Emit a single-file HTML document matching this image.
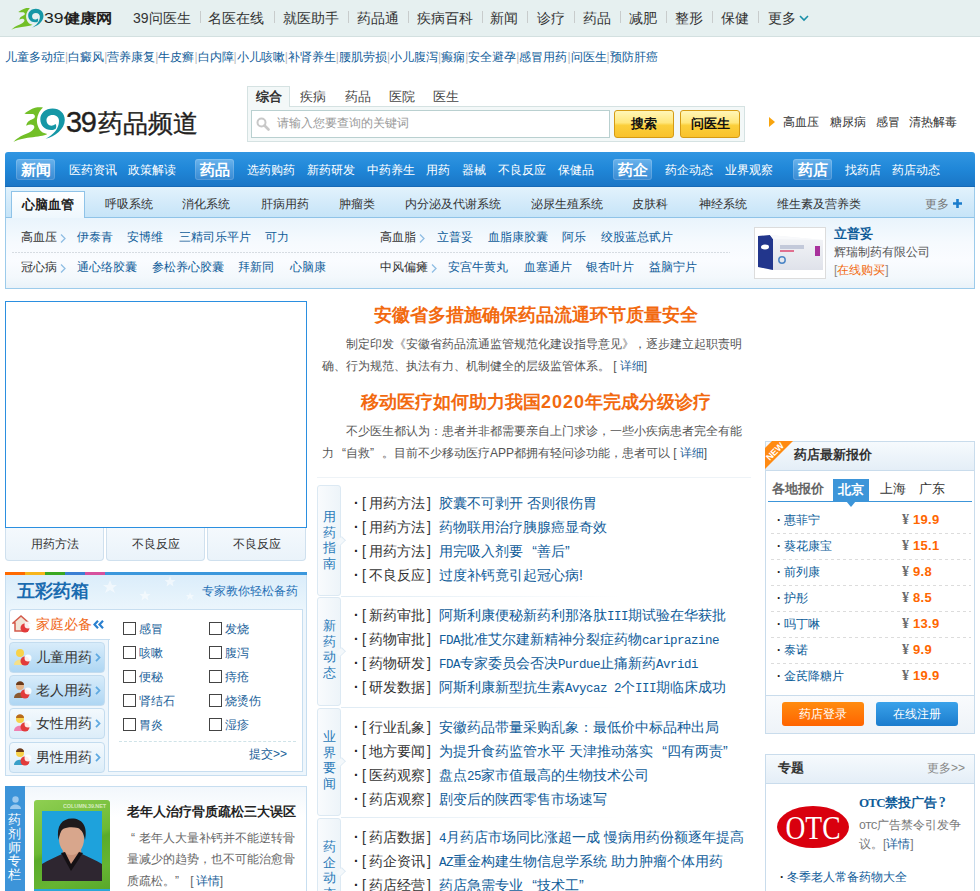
<!DOCTYPE html>
<html><head><meta charset="utf-8">
<style>
*{margin:0;padding:0;box-sizing:border-box}
body{width:980px;height:891px;overflow:hidden;position:relative;background:#fff;font-family:"Liberation Sans",sans-serif;font-size:12px;color:#333}
.a{position:absolute;white-space:nowrap}
a{color:inherit;text-decoration:none}
/* top bar */
#top{position:absolute;left:0;top:0;width:980px;height:37px;background:#e6f0f0;border-bottom:1px solid #d3e0e0}
#top .nav{position:absolute;top:9px;font-size:14px;color:#333;line-height:18px}
#top .sep{position:absolute;top:11px;width:1px;height:12px;background:#c8cccc}
#links{position:absolute;left:5px;top:48px;font-size:12px;line-height:18px;color:#0f5c99}
#links i{font-style:normal;color:#bbb}

/* header */
#srch{position:absolute;left:247px;top:106px;width:498px;height:36px;background:#f3f8f8;border:1px solid #d5e2e2}
#stab{position:absolute;left:247px;top:86px;width:43px;height:21px;background:#f3f8f8;border:1px solid #d5e2e2;border-bottom:none;font-weight:bold;font-size:13px;color:#333;text-align:center;line-height:19px}
.stx{position:absolute;top:87px;font-size:13px;color:#444;line-height:19px}
#sinp{position:absolute;left:251px;top:110px;width:359px;height:28px;background:#fff;border:1px solid #b9d0d0}
.btn{position:absolute;top:110px;width:60px;height:28px;border:1px solid #d59b14;border-radius:3px;background:linear-gradient(#fff6b8,#ffe77c 45%,#fbcf3b 55%,#f9c22c);font-weight:bold;font-size:13px;color:#111;text-align:center;line-height:25px}
.hk{position:absolute;top:113px;font-size:12px;color:#333;line-height:18px}
/* blue nav */
#bnav{position:absolute;left:5px;top:152px;width:970px;height:35px;background:linear-gradient(#3196e2,#2087d8 50%,#1a76c6);border-bottom:1px solid #1669b6;border-radius:3px 3px 0 0}
.bn{position:absolute;top:161px;font-size:12px;color:#fff;line-height:18px}
.bb{position:absolute;top:159px;height:21px;width:39px;border-radius:3px;background:linear-gradient(#6ab3ec,#4c9de0 50%,#3a8ad2);box-shadow:inset 0 0 0 1px rgba(255,255,255,.15);font-weight:bold;font-size:15px;color:#fff;text-align:center;line-height:21px}
#subbar{position:absolute;left:5px;top:187px;width:970px;height:31px;background:linear-gradient(#e2f2fc,#c6e4f8);border-left:1px solid #9ccbeb;border-right:1px solid #9ccbeb;border-bottom:1px solid #8fc3e8}
.st{position:absolute;top:195px;font-size:12px;color:#333;line-height:18px}
#seltab{position:absolute;left:11px;top:191px;width:74px;height:27px;background:linear-gradient(#fff,#eef7fd);border:1px solid #8fc3e8;border-bottom:none;font-weight:bold;font-size:13px;color:#222;text-align:center;line-height:25px}
#cbox{position:absolute;left:5px;top:218px;width:970px;height:71px;border:1px solid #9ccbeb;border-top:none;background:linear-gradient(#e9f4fc,#f6fafe 35%,#fafcff 60%,#f3f8fc 85%,#e9f2f9)}
.cl{position:absolute;font-size:12px;color:#0f5c99;line-height:18px}
.ch{position:absolute;font-size:12px;color:#333;line-height:18px}
.ar{position:absolute;width:6px;height:10px}

/* left col */
#slide{position:absolute;left:5px;top:301px;width:302px;height:227px;border:1px solid #2b8fe0;background:#fff}
.tb{position:absolute;top:528px;width:99px;height:33px;border:1px solid #cfe0ee;border-top:none;border-radius:0 0 4px 4px;background:linear-gradient(#f4f9fd,#eaf3fa);font-size:12px;color:#333;text-align:center;line-height:32px}
#wc{position:absolute;left:5px;top:572px;width:302px;height:204px;border:1px solid #c7def0;border-top:none;background:linear-gradient(#d9ecfa,#eaf5fc 35px,#eef6fc 40px,#eef6fc)}
#wcs{position:absolute;left:5px;top:572px;width:302px;height:3px;background:linear-gradient(90deg,#ff6a00 0,#ff6a00 20px,#f7b51c 20px,#f7b51c 40px,#3aa822 40px,#3aa822 60px,#3b7fd4 60px,#3b7fd4 80px,#d6519e 80px,#d6519e 100px,#3b97dc 100px)}
#wcp{position:absolute;left:108px;top:609px;width:195px;height:163px;border:1px solid #c7def0;background:#fff}
.wb{position:absolute;left:9px;width:96px;height:31px;border:1px solid #c3dcef;border-radius:4px;font-size:14px;color:#333;line-height:29px}
.wb span{position:absolute;left:26px;top:0}
.cb{position:absolute;width:13px;height:13px;border:1px solid #444;background:#fff}
.cbl{position:absolute;font-size:12px;color:#1a6199;line-height:16px}
/* pharmacist */
#ph{position:absolute;left:5px;top:786px;width:302px;height:110px;border:1px solid #c7def0;background:linear-gradient(#f2f7fc,#fff 30px)}
#phs{position:absolute;left:5px;top:786px;width:20px;height:110px;background:#3c94d9}
/* middle */
.hl{position:absolute;font-size:18px;font-weight:bold;color:#f26a10;line-height:24px}
.pp{position:absolute;left:322px;width:430px;font-size:12px;color:#555;line-height:22px;text-indent:24px;white-space:normal}
.dl{color:#1a6199}
.gtab{position:absolute;left:317px;width:24px;border:1px solid #dce9f3;border-radius:3px;background:linear-gradient(90deg,#f9fbfd,#edf4f9);font-size:13px;color:#2a7ab8;text-align:center;line-height:15.7px;padding-top:0}
.gtab:after{content:"";position:absolute;right:-5px;top:50%;margin-top:-4px;width:7px;height:7px;background:#f4f8fb;border-top:1px solid #dce9f3;border-right:1px solid #dce9f3;transform:rotate(45deg) scaleX(.7)}
.gli{position:absolute;left:354px;width:400px;height:24px;font-size:14px;line-height:24px;color:#333;white-space:nowrap}
.gli b{position:absolute;left:85px;top:0;font-weight:normal;color:#0f5c99}
.gli i{font-style:normal;font-family:"Liberation Mono",monospace;font-size:12.5px;letter-spacing:-0.5px}
.gli u{text-decoration:none;position:absolute;left:0;top:0}
.gsep{position:absolute;left:341px;width:410px;height:1px;background:linear-gradient(90deg,#dfebf4,rgba(240,245,250,0) 280px)}
/* right */
#pr{position:absolute;left:765px;top:441px;width:210px;height:293px;border:1px solid #c9dcec;background:#fff}
#prh{position:absolute;left:766px;top:442px;width:208px;height:29px;background:linear-gradient(#f6fafd,#e4eef7);border-bottom:1px solid #c9dcec}
.pi{position:absolute;left:777px;font-size:12px;color:#0b5c98;line-height:18px}
.pv{position:absolute;left:902px;font-size:12px;color:#666;line-height:18px}
.pv em{font-style:normal;display:inline-block;width:11px;font-family:"Liberation Serif",serif;font-size:14px;font-weight:bold;color:#6a6a6a}
.pv b{color:#ff6600;font-size:13px;font-family:"Liberation Sans",sans-serif;letter-spacing:.3px}
.pd{position:absolute;left:771px;width:200px;height:1px;background:repeating-linear-gradient(90deg,#dcdcdc 0 3px,transparent 3px 6px)}
#prf{position:absolute;left:766px;top:695px;width:208px;height:38px;border-top:1px solid #c9dcec;background:linear-gradient(#f9fbfd,#eef3f8)}
.pb{position:absolute;top:702px;width:82px;height:24px;border-radius:3px;font-size:12px;color:#fff;text-align:center;line-height:24px}
#zt{position:absolute;left:765px;top:754px;width:210px;height:145px;border:1px solid #c9dcec;background:#fff}
#zth{position:absolute;left:766px;top:755px;width:208px;height:29px;background:linear-gradient(#f6fafd,#e4eef7);border-bottom:1px solid #c9dcec}
.ql{display:inline-block;width:1em;text-align:right;text-indent:0}.qr{display:inline-block;width:1em;text-align:left;text-indent:0}
</style></head>
<body>
<div id="top">
  <svg class="a" style="left:7.5px;top:1px" width="40" height="30" viewBox="0 0 64 48"><path d="M16.4 17.4 C20 15.5 23 13 27 11.8 C29.5 11.2 32 11.3 35 11.4 C32 14 29.5 18 28.9 24 C28.8 28 30.5 33 33.4 35.6 C35 37 37 37.6 39.3 38.1 C36 40 30 40.6 22 41.6 C16 42.5 9 44 5.4 46 C8 43 12 40 19 37.4 C22 36.4 25 34.5 26.2 32 C26.5 30.5 26 29.5 25.3 29.3 C23.5 28 21 28.4 18.2 29.8 C18.5 27.5 19.5 26 21 25 C23 23.5 25 23 26.2 22.2 C27 21.3 27 20 26.7 19.5 C26 18.5 25 18.1 24.4 18.1 C22 17.8 19 18.3 16.4 17.4 Z" fill="#72bf27"/><path d="M37.6 42.8 C47 40.5 56.8 33 56.8 24 C56.8 17 51.5 12.4 44.6 12.4 C37.5 12.4 32.3 17 32.3 23.2 C32.3 29.5 37 34 43 34 C45 34 46.5 33.5 47.5 33 C48.5 31.5 48.5 29 47.5 28 C46 29.3 44.8 29.7 43.5 29.7 C40.5 29.7 38.5 27.3 38.5 24.3 C38.5 21.5 40.5 19 44.6 19 C48.5 19 51 21.5 51 25 C51 33 45 39 37.6 42.8 Z" fill="#1597a6"/></svg>
  <div class="a" style="left:44px;top:9px;font-size:14px;font-weight:bold;color:#231f20;line-height:18px;transform:scaleX(1.17);transform-origin:0 0"><span style="font-weight:normal;font-size:15px">39</span>健康网</div>
  <div class="nav" style="left:133px">39问医生</div><span class="sep" style="left:200px"></span>
  <div class="nav" style="left:208px">名医在线</div><span class="sep" style="left:274px"></span>
  <div class="nav" style="left:283px">就医助手</div><span class="sep" style="left:348px"></span>
  <div class="nav" style="left:357px">药品通</div><span class="sep" style="left:408px"></span>
  <div class="nav" style="left:417px">疾病百科</div><span class="sep" style="left:482px"></span>
  <div class="nav" style="left:490px">新闻</div><span class="sep" style="left:527px"></span>
  <div class="nav" style="left:537px">诊疗</div><span class="sep" style="left:574px"></span>
  <div class="nav" style="left:583px">药品</div><span class="sep" style="left:620px"></span>
  <div class="nav" style="left:629px">减肥</div><span class="sep" style="left:666px"></span>
  <div class="nav" style="left:675px">整形</div><span class="sep" style="left:712px"></span>
  <div class="nav" style="left:721px">保健</div><span class="sep" style="left:758px"></span>
  <div class="nav" style="left:768px">更多</div>
  <svg class="a" style="left:799px;top:15px" width="10" height="7" viewBox="0 0 10 7"><path d="M1 1 L5 5 L9 1" stroke="#1a8fa8" stroke-width="1.6" fill="none"/></svg>
</div>
<div id="links">儿童多动症<i>|</i>白癜风<i>|</i>营养康复<i>|</i>牛皮癣<i>|</i>白内障<i>|</i>小儿咳嗽<i>|</i>补肾养生<i>|</i>腰肌劳损<i>|</i>小儿腹泻<i>|</i>癫痫<i>|</i>安全避孕<i>|</i>感冒用药<i>|</i>问医生<i>|</i>预防肝癌</div>


<svg class="a" style="left:8px;top:96px" width="64" height="48" viewBox="0 0 64 48"><path d="M16.4 17.4 C20 15.5 23 13 27 11.8 C29.5 11.2 32 11.3 35 11.4 C32 14 29.5 18 28.9 24 C28.8 28 30.5 33 33.4 35.6 C35 37 37 37.6 39.3 38.1 C36 40 30 40.6 22 41.6 C16 42.5 9 44 5.4 46 C8 43 12 40 19 37.4 C22 36.4 25 34.5 26.2 32 C26.5 30.5 26 29.5 25.3 29.3 C23.5 28 21 28.4 18.2 29.8 C18.5 27.5 19.5 26 21 25 C23 23.5 25 23 26.2 22.2 C27 21.3 27 20 26.7 19.5 C26 18.5 25 18.1 24.4 18.1 C22 17.8 19 18.3 16.4 17.4 Z" fill="#72bf27"/><path d="M37.6 42.8 C47 40.5 56.8 33 56.8 24 C56.8 17 51.5 12.4 44.6 12.4 C37.5 12.4 32.3 17 32.3 23.2 C32.3 29.5 37 34 43 34 C45 34 46.5 33.5 47.5 33 C48.5 31.5 48.5 29 47.5 28 C46 29.3 44.8 29.7 43.5 29.7 C40.5 29.7 38.5 27.3 38.5 24.3 C38.5 21.5 40.5 19 44.6 19 C48.5 19 51 21.5 51 25 C51 33 45 39 37.6 42.8 Z" fill="#1597a6"/></svg>
<div class="a" style="left:66px;top:105px;font-size:25px;font-weight:500;color:#231f20;line-height:34px;-webkit-text-stroke:.35px #231f20"><span style="font-size:29px;letter-spacing:-1.5px;margin-right:3px;font-weight:normal">39</span>药品频道</div>

<div id="srch"></div>
<div id="stab">综合</div>
<div class="stx" style="left:300px">疾病</div>
<div class="stx" style="left:345px">药品</div>
<div class="stx" style="left:389px">医院</div>
<div class="stx" style="left:433px">医生</div>
<div id="sinp"></div>
<svg class="a" style="left:256px;top:117px" width="14" height="14" viewBox="0 0 14 14"><circle cx="5.5" cy="5.5" r="4" stroke="#c8c8c8" stroke-width="2" fill="none"/><path d="M8.5 8.5 L12.5 12.5" stroke="#c8c8c8" stroke-width="2.6" stroke-linecap="round"/></svg>
<div class="a" style="left:277px;top:114px;font-size:12px;color:#999;line-height:18px">请输入您要查询的关键词</div>
<div class="btn" style="left:614px">搜索</div>
<div class="btn" style="left:680px">问医生</div>
<svg class="a" style="left:769px;top:117px" width="6" height="10" viewBox="0 0 6 10"><path d="M0 0 L6 5 L0 10Z" fill="#f8a40e"/></svg>
<div class="hk" style="left:783px">高血压</div>
<div class="hk" style="left:830px">糖尿病</div>
<div class="hk" style="left:876px">感冒</div>
<div class="hk" style="left:909px">清热解毒</div>

<div id="bnav"></div>
<div class="bb" style="left:16px">新闻</div>
<div class="bn" style="left:69px">医药资讯</div>
<div class="bn" style="left:128px">政策解读</div>
<div class="bb" style="left:195px">药品</div>
<div class="bn" style="left:247px">选药购药</div>
<div class="bn" style="left:307px">新药研发</div>
<div class="bn" style="left:367px">中药养生</div>
<div class="bn" style="left:426px">用药</div>
<div class="bn" style="left:462px">器械</div>
<div class="bn" style="left:498px">不良反应</div>
<div class="bn" style="left:558px">保健品</div>
<div class="bb" style="left:613px">药企</div>
<div class="bn" style="left:665px">药企动态</div>
<div class="bn" style="left:725px">业界观察</div>
<div class="bb" style="left:793px">药店</div>
<div class="bn" style="left:845px">找药店</div>
<div class="bn" style="left:892px">药店动态</div>

<div id="subbar"></div>
<div id="seltab">心脑血管</div>
<div class="st" style="left:105px">呼吸系统</div>
<div class="st" style="left:182px">消化系统</div>
<div class="st" style="left:261px">肝病用药</div>
<div class="st" style="left:339px">肿瘤类</div>
<div class="st" style="left:405px">内分泌及代谢系统</div>
<div class="st" style="left:531px">泌尿生殖系统</div>
<div class="st" style="left:632px">皮肤科</div>
<div class="st" style="left:699px">神经系统</div>
<div class="st" style="left:777px">维生素及营养类</div>
<div class="st" style="left:925px;color:#777">更多</div>
<svg class="a" style="left:953px;top:199px" width="9" height="9" viewBox="0 0 9 9"><path d="M3.2 0 H5.8 V3.2 H9 V5.8 H5.8 V9 H3.2 V5.8 H0 V3.2 H3.2Z" fill="#1a7ccc"/></svg>

<div id="cbox"></div>
<div class="a" style="left:12px;top:252px;width:718px;height:1px;background:repeating-linear-gradient(90deg,#d6dce2 0 2px,transparent 2px 3px)"></div>
<svg class="a" style="left:60px;top:234px" width="6" height="9" viewBox="0 0 6 9"><path d="M1 0.5 L5 4.5 L1 8.5" stroke="#8fbde3" stroke-width="1.3" fill="none"/></svg>
<svg class="a" style="left:60px;top:264px" width="6" height="9" viewBox="0 0 6 9"><path d="M1 0.5 L5 4.5 L1 8.5" stroke="#8fbde3" stroke-width="1.3" fill="none"/></svg>
<svg class="a" style="left:419px;top:234px" width="6" height="9" viewBox="0 0 6 9"><path d="M1 0.5 L5 4.5 L1 8.5" stroke="#8fbde3" stroke-width="1.3" fill="none"/></svg>
<svg class="a" style="left:431px;top:264px" width="6" height="9" viewBox="0 0 6 9"><path d="M1 0.5 L5 4.5 L1 8.5" stroke="#8fbde3" stroke-width="1.3" fill="none"/></svg>
<div class="ch" style="left:21px;top:228px">高血压</div>
<div class="ch" style="left:21px;top:258px">冠心病</div>
<div class="ch" style="left:380px;top:228px">高血脂</div>
<div class="ch" style="left:380px;top:258px">中风偏瘫</div>
<div class="cl" style="left:77px;top:228px">伊泰青</div>
<div class="cl" style="left:127px;top:228px">安博维</div>
<div class="cl" style="left:179px;top:228px">三精司乐平片</div>
<div class="cl" style="left:265px;top:228px">可力</div>
<div class="cl" style="left:437px;top:228px">立普妥</div>
<div class="cl" style="left:488px;top:228px">血脂康胶囊</div>
<div class="cl" style="left:562px;top:228px">阿乐</div>
<div class="cl" style="left:601px;top:228px">绞股蓝总甙片</div>
<div class="cl" style="left:77px;top:258px">通心络胶囊</div>
<div class="cl" style="left:152px;top:258px">参松养心胶囊</div>
<div class="cl" style="left:238px;top:258px">拜新同</div>
<div class="cl" style="left:290px;top:258px">心脑康</div>
<div class="cl" style="left:448px;top:258px">安宫牛黄丸</div>
<div class="cl" style="left:524px;top:258px">血塞通片</div>
<div class="cl" style="left:586px;top:258px">银杏叶片</div>
<div class="cl" style="left:649px;top:258px">益脑宁片</div>

<div class="a" style="left:754px;top:227px;width:72px;height:52px;border:1px solid #dcdcdc;background:#fff"></div>
<svg class="a" style="left:756px;top:234px" width="68" height="38" viewBox="0 0 68 38">
  <defs><linearGradient id="pk" x1="0" y1="0" x2="0" y2="1"><stop offset="0" stop-color="#f4f5f8"/><stop offset="1" stop-color="#dfe2ea"/></linearGradient></defs>
  <path d="M2 2 L14 1 L67 6 L67 36 L16 36 L2 33Z" fill="url(#pk)"/>
  <path d="M2 2 L14 1 L17 5 L17 36 L2 33Z" fill="#22368c"/>
  <path d="M14 1 L67 6 L17 5Z" fill="#f8f9fb"/>
  <rect x="59" y="12" width="5" height="10" fill="#a8319c"/>
  <rect x="24" y="11" width="24" height="4" fill="#c3c9da"/>
  <rect x="24" y="16" width="14" height="2" fill="#e07090"/>
  <circle cx="26" cy="26" r="3.2" fill="none" stroke="#4d86c6" stroke-width="1.5"/>
  <ellipse cx="9" cy="13" rx="4" ry="2.4" fill="#fff"/>
</svg>
<div class="a" style="left:834px;top:225px;font-size:13px;font-weight:bold;color:#0f5c99;line-height:18px">立普妥</div>
<div class="a" style="left:834px;top:243px;font-size:12px;color:#555;line-height:18px">辉瑞制药有限公司</div>
<div class="a" style="left:834px;top:261px;font-size:12px;color:#888;line-height:18px">[<span style="color:#f26a10">在线购买</span>]</div>

<div id="slide"></div>
<div class="tb" style="left:5px">用药方法</div>
<div class="tb" style="left:106px">不良反应</div>
<div class="tb" style="left:207px">不良反应</div>

<div id="wc"></div>
<div id="wcs"></div>
<svg class="a" style="left:100px;top:576px" width="150" height="30" viewBox="0 0 150 30">
  <g fill="#fff" opacity=".55">
   <path d="M10 4 L12 9 L17 9 L13 12 L15 17 L10 14 L5 17 L7 12 L3 9 L8 9Z"/>
   <path d="M45 14 L46.5 18 L50.5 18 L47.5 20.5 L48.5 24.5 L45 22 L41.5 24.5 L42.5 20.5 L39.5 18 L43.5 18Z"/>
   <path d="M70 0 L71.5 4 L75.5 4 L72.5 6.5 L73.5 10.5 L70 8 L66.5 10.5 L67.5 6.5 L64.5 4 L68.5 4Z"/>
   <path d="M90 16 L91 19 L94 19 L92 21 L93 24 L90 22 L87 24 L88 21 L86 19 L89 19Z"/>
  </g>
</svg>
<div class="a" style="left:17px;top:580px;font-size:18px;font-weight:bold;color:#1a6bb0;line-height:22px">五彩药箱</div>
<div class="a" style="left:202px;top:583px;font-size:12px;color:#1f6fb5;line-height:16px">专家教你轻松备药</div>
<div id="wcp"></div>
<div class="a" style="left:9px;top:609px;width:101px;height:31px;background:#fff;border:1px solid #c7def0;border-right:none;border-radius:4px 0 0 4px"></div>
<div class="a" style="left:36px;top:615px;font-size:14px;color:#f06a1c;line-height:18px">家庭必备</div>
<svg class="a" style="left:93px;top:620px" width="11" height="9" viewBox="0 0 11 9"><path d="M5 0.8 L1.5 4.5 L5 8.2 M10 0.8 L6.5 4.5 L10 8.2" stroke="#2a80d0" stroke-width="2.2" fill="none"/></svg>
<div class="wb" style="top:642px;background:linear-gradient(#d8ecfa,#aed6f3)"><span>儿童用药</span></div>
<div class="wb" style="top:675px;background:linear-gradient(#d8ecfa,#aed6f3)"><span>老人用药</span></div>
<div class="wb" style="top:708px;background:linear-gradient(#f3f9fd,#dcedf9)"><span>女性用药</span></div>
<div class="wb" style="top:742px;background:linear-gradient(#f3f9fd,#dcedf9)"><span>男性用药</span></div>
<svg class="a" style="left:95px;top:653px" width="6" height="9" viewBox="0 0 6 9"><path d="M1 0.8 L4.5 4.5 L1 8.2" stroke="#5fa9e0" stroke-width="1.8" fill="none"/></svg>
<svg class="a" style="left:95px;top:686px" width="6" height="9" viewBox="0 0 6 9"><path d="M1 0.8 L4.5 4.5 L1 8.2" stroke="#5fa9e0" stroke-width="1.8" fill="none"/></svg>
<svg class="a" style="left:95px;top:719px" width="6" height="9" viewBox="0 0 6 9"><path d="M1 0.8 L4.5 4.5 L1 8.2" stroke="#5fa9e0" stroke-width="1.8" fill="none"/></svg>
<svg class="a" style="left:95px;top:753px" width="6" height="9" viewBox="0 0 6 9"><path d="M1 0.8 L4.5 4.5 L1 8.2" stroke="#5fa9e0" stroke-width="1.8" fill="none"/></svg>
<svg class="a" style="left:12px;top:614px" width="20" height="20" viewBox="0 0 20 20"><path d="M1 9 L9 2 L17 9 L15 9 L15 17 L3 17 L3 9Z" fill="#f0e6d8" stroke="#d35a4a" stroke-width="1.5"/><circle cx="13" cy="14" r="4.5" fill="#e23b3b"/><circle cx="16" cy="11" r="3.5" fill="#fff" opacity=".9"/></svg>
<svg class="a" style="left:12px;top:647px" width="20" height="20" viewBox="0 0 20 20"><circle cx="8" cy="6" r="4" fill="#f8d24a"/><path d="M2 18 C2 11 14 11 14 18Z" fill="#f5e08a"/><circle cx="13" cy="14" r="4.5" fill="#e23b3b"/><circle cx="16" cy="11" r="3.5" fill="#fff" opacity=".9"/></svg>
<svg class="a" style="left:12px;top:680px" width="20" height="20" viewBox="0 0 20 20"><circle cx="8" cy="6" r="4" fill="#e5b48a"/><path d="M4 5 C4 0 12 0 12 5Z" fill="#6b3b1b"/><path d="M2 18 C2 11 14 11 14 18Z" fill="#8a5a32"/><circle cx="13" cy="14" r="4.5" fill="#e23b3b"/><circle cx="16" cy="11" r="3.5" fill="#fff" opacity=".9"/></svg>
<svg class="a" style="left:12px;top:713px" width="20" height="20" viewBox="0 0 20 20"><circle cx="8" cy="6" r="4" fill="#f8d24a"/><path d="M4 5 C4 0 12 0 12 5Z" fill="#b86b1b"/><path d="M2 18 C2 11 14 11 14 18Z" fill="#ef7fb0"/><circle cx="13" cy="14" r="4.5" fill="#e23b3b"/><circle cx="16" cy="11" r="3.5" fill="#fff" opacity=".9"/></svg>
<svg class="a" style="left:12px;top:747px" width="20" height="20" viewBox="0 0 20 20"><circle cx="8" cy="6" r="4" fill="#f8d24a"/><path d="M4 5 C4 0 12 0 12 5Z" fill="#6b3b1b"/><path d="M2 18 C2 11 14 11 14 18Z" fill="#3aa0c8"/><circle cx="13" cy="14" r="4.5" fill="#e23b3b"/><circle cx="16" cy="11" r="3.5" fill="#fff" opacity=".9"/></svg>

<div class="cb" style="left:123px;top:622px"></div><div class="cbl" style="left:139px;top:621px">感冒</div>
<div class="cb" style="left:209px;top:622px"></div><div class="cbl" style="left:225px;top:621px">发烧</div>
<div class="cb" style="left:123px;top:646px"></div><div class="cbl" style="left:139px;top:645px">咳嗽</div>
<div class="cb" style="left:209px;top:646px"></div><div class="cbl" style="left:225px;top:645px">腹泻</div>
<div class="cb" style="left:123px;top:670px"></div><div class="cbl" style="left:139px;top:669px">便秘</div>
<div class="cb" style="left:209px;top:670px"></div><div class="cbl" style="left:225px;top:669px">痔疮</div>
<div class="cb" style="left:123px;top:694px"></div><div class="cbl" style="left:139px;top:693px">肾结石</div>
<div class="cb" style="left:209px;top:694px"></div><div class="cbl" style="left:225px;top:693px">烧烫伤</div>
<div class="cb" style="left:123px;top:718px"></div><div class="cbl" style="left:139px;top:717px">胃炎</div>
<div class="cb" style="left:209px;top:718px"></div><div class="cbl" style="left:225px;top:717px">湿疹</div>
<div class="a" style="left:119px;top:741px;width:177px;border-top:1px dashed #cfe3e8"></div>
<div class="a" style="left:249px;top:746px;font-size:12px;color:#1a6199;line-height:16px">提交&gt;&gt;</div>

<div id="ph"></div>
<div id="phs"></div>
<svg class="a" style="left:10px;top:796px" width="11" height="13" viewBox="0 0 11 13"><circle cx="5.5" cy="3.5" r="3.2" fill="#9cc9ee"/><path d="M0 13 C0 7 11 7 11 13Z" fill="#9cc9ee"/></svg>
<div class="a" style="left:8px;top:813px;width:14px;font-size:13px;color:#fff;line-height:13.8px;white-space:normal">药剂师专栏</div>
<div class="a" style="left:34px;top:800px;width:76px;height:95px;border-radius:3px;background:linear-gradient(160deg,#8fcf52,#6cb934 45%,#5aab2a 50%,#66b532 75%,#55a528)"></div><div class="a" style="left:34px;top:889px;width:76px;height:3px;background:#2aa6d8"></div>
<div class="a" style="left:63px;top:802px;font-size:5.5px;color:#e0f2d0;font-weight:bold;line-height:8px;letter-spacing:-.1px;opacity:.85">COLUMN.39.NET</div>
<svg class="a" style="left:42px;top:811px" width="60" height="70" viewBox="0 0 60 70">
  <rect width="60" height="70" fill="#1ea2dc"/>
  <path d="M21 38 L39 38 L40 48 L29 56 L20 48Z" fill="#c99279"/>
  <ellipse cx="29.5" cy="28" rx="12.5" ry="16" fill="#d8a68c"/>
  <path d="M16.5 29 C14 15 20 7.5 30 7.5 C40 7.5 46 15 43 29 C42 23 40 19 36 17 C31 16 25 16 21 18 C18.5 20 17.5 24 16.5 29Z" fill="#1f1a1c"/>
  <path d="M0 70 L0 53 C6 49 14 46 20 43 L29 58 L40 43 C46 46 54 49 60 53 L60 70Z" fill="#2e2630"/>
  <path d="M19 42 L29 60 L41 42 L37 41 L29 53 L23 41Z" fill="#141014"/>
</svg>
<div class="a" style="left:127px;top:803px;font-size:13px;font-weight:bold;color:#222;line-height:18px">老年人治疗骨质疏松三大误区</div>
<div class="a" style="left:127px;top:828px;width:172px;font-size:12px;color:#666;line-height:21.4px;white-space:normal"><span class="ql" style="text-align:center">“</span>老年人大量补钙并不能逆转骨量减少的趋势，也不可能治愈骨质疏松。<span class="qr">”</span> <span style="letter-spacing:2px">[</span><span class="dl">详情</span>]</div>

<div class="hl" style="left:374px;top:303px">安徽省多措施确保药品流通环节质量安全</div>
<div class="pp" style="top:333px">制定印发《安徽省药品流通监管规范化建设指导意见》，逐步建立起职责明确、行为规范、执法有力、机制健全的层级监管体系。 <span style="letter-spacing:3px">[</span><span class="dl">详细</span>]</div>
<div class="hl" style="left:361px;top:390px">移动医疗如何助力我国<span style="letter-spacing:1px">2020</span>年完成分级诊疗</div>
<div class="pp" style="top:420px">不少医生都认为：患者并非都需要亲自上门求诊，一些小疾病患者完全有能力<span class="ql">“</span>自救<span class="qr">”</span>。目前不少移动医疗APP都拥有轻问诊功能，患者可以 <span style="letter-spacing:3px">[</span><span class="dl">详细</span>]</div>

<div class="gsep" style="top:477px;left:317px;width:434px;background:#eef3f7"></div>
<div class="gtab" style="top:485px;height:111px;padding-top:23px">用<br>药<br>指<br>南</div>
<div class="gli" style="top:491px"><u style="font-weight:bold;color:#222">·</u><u style="left:8px">[</u><u style="left:15px">用药方法</u><u style="left:73px">]</u><b>胶囊不可剥开 否则很伤胃</b></div>
<div class="gli" style="top:515px"><u style="font-weight:bold;color:#222">·</u><u style="left:8px">[</u><u style="left:15px">用药方法</u><u style="left:73px">]</u><b>药物联用治疗胰腺癌显奇效</b></div>
<div class="gli" style="top:539px"><u style="font-weight:bold;color:#222">·</u><u style="left:8px">[</u><u style="left:15px">用药方法</u><u style="left:73px">]</u><b>用完吸入剂要<span class="ql">“</span>善后<span class="qr">”</span></b></div>
<div class="gli" style="top:563px"><u style="font-weight:bold;color:#222">·</u><u style="left:8px">[</u><u style="left:15px">不良反应</u><u style="left:73px">]</u><b>过度补钙竟引起冠心病!</b></div>
<div class="gsep" style="top:596px"></div>
<div class="gtab" style="top:597px;height:109px;padding-top:20px">新<br>药<br>动<br>态</div>
<div class="gli" style="top:603px"><u style="font-weight:bold;color:#222">·</u><u style="left:8px">[</u><u style="left:15px">新药审批</u><u style="left:73px">]</u><b>阿斯利康便秘新药利那洛肽<i>III</i>期试验在华获批</b></div>
<div class="gli" style="top:627px"><u style="font-weight:bold;color:#222">·</u><u style="left:8px">[</u><u style="left:15px">药物审批</u><u style="left:73px">]</u><b><i>FDA</i>批准艾尔建新精神分裂症药物<i>cariprazine</i></b></div>
<div class="gli" style="top:651px"><u style="font-weight:bold;color:#222">·</u><u style="left:8px">[</u><u style="left:15px">药物研发</u><u style="left:73px">]</u><b><i>FDA</i>专家委员会否决<i>Purdue</i>止痛新药<i>Avridi</i></b></div>
<div class="gli" style="top:675px"><u style="font-weight:bold;color:#222">·</u><u style="left:8px">[</u><u style="left:15px">研发数据</u><u style="left:73px">]</u><b>阿斯利康新型抗生素<i>Avycaz 2</i>个<i>III</i>期临床成功</b></div>
<div class="gsep" style="top:707px"></div>
<div class="gtab" style="top:708px;height:108px;padding-top:20px">业<br>界<br>要<br>闻</div>
<div class="gli" style="top:715px"><u style="font-weight:bold;color:#222">·</u><u style="left:8px">[</u><u style="left:15px">行业乱象</u><u style="left:73px">]</u><b>安徽药品带量采购乱象：最低价中标品种出局</b></div>
<div class="gli" style="top:739px"><u style="font-weight:bold;color:#222">·</u><u style="left:8px">[</u><u style="left:15px">地方要闻</u><u style="left:73px">]</u><b>为提升食药监管水平 天津推动落实<span class="ql">“</span>四有两责<span class="qr">”</span></b></div>
<div class="gli" style="top:763px"><u style="font-weight:bold;color:#222">·</u><u style="left:8px">[</u><u style="left:15px">医药观察</u><u style="left:73px">]</u><b>盘点<i>25</i>家市值最高的生物技术公司</b></div>
<div class="gli" style="top:787px"><u style="font-weight:bold;color:#222">·</u><u style="left:8px">[</u><u style="left:15px">药店观察</u><u style="left:73px">]</u><b>剧变后的陕西零售市场速写</b></div>
<div class="gsep" style="top:817px"></div>
<div class="gtab" style="top:818px;height:108px;padding-top:20px">药<br>企<br>动<br>态</div>
<div class="gli" style="top:825px"><u style="font-weight:bold;color:#222">·</u><u style="left:8px">[</u><u style="left:15px">药店数据</u><u style="left:73px">]</u><b><i>4</i>月药店市场同比涨超一成 慢病用药份额逐年提高</b></div>
<div class="gli" style="top:849px"><u style="font-weight:bold;color:#222">·</u><u style="left:8px">[</u><u style="left:15px">药企资讯</u><u style="left:73px">]</u><b><i>AZ</i>重金构建生物信息学系统 助力肿瘤个体用药</b></div>
<div class="gli" style="top:873px"><u style="font-weight:bold;color:#222">·</u><u style="left:8px">[</u><u style="left:15px">药店经营</u><u style="left:73px">]</u><b>药店急需专业<span class="ql">“</span>技术工<span class="qr">”</span></b></div>

<div id="pr"></div>
<div id="prh"></div>
<svg class="a" style="left:765px;top:441px" width="30" height="30" viewBox="0 0 30 30"><path d="M0 7 L7 0 L28 0 L0 28Z" fill="#ff8a12"/><text x="0" y="0" transform="translate(10 10.5) rotate(-45)" text-anchor="middle" dominant-baseline="central" font-size="9" font-weight="bold" fill="#fff" font-family="Liberation Sans">NEW</text></svg>
<div class="a" style="left:794px;top:446px;font-size:13px;font-weight:bold;color:#333;line-height:18px">药店最新报价</div>
<div class="a" style="left:768px;top:501px;width:204px;height:1px;background:#3c95d9"></div>
<div class="a" style="left:772px;top:480px;font-size:13px;font-weight:bold;color:#666;line-height:18px">各地报价</div>
<div class="a" style="left:833px;top:479px;width:36px;height:22px;background:#3c95d9;font-size:13px;font-weight:bold;color:#fff;line-height:22px;text-align:center">北京</div>
<svg class="a" style="left:846px;top:501px" width="10" height="6" viewBox="0 0 10 6"><path d="M0 0 L10 0 L5 6Z" fill="#3c95d9"/></svg>
<div class="a" style="left:880px;top:480px;font-size:13px;color:#333;line-height:18px">上海</div>
<div class="a" style="left:919px;top:480px;font-size:13px;color:#333;line-height:18px">广东</div>
<div class="pi" style="top:511px"><span style="color:#222;font-weight:bold">·</span> 惠菲宁</div><div class="pv" style="top:511px"><em>¥</em><b>19.9</b></div>
<div class="pd" style="top:533px"></div>
<div class="pi" style="top:537px"><span style="color:#222;font-weight:bold">·</span> 葵花康宝</div><div class="pv" style="top:537px"><em>¥</em><b>15.1</b></div>
<div class="pd" style="top:559px"></div>
<div class="pi" style="top:563px"><span style="color:#222;font-weight:bold">·</span> 前列康</div><div class="pv" style="top:563px"><em>¥</em><b>9.8</b></div>
<div class="pd" style="top:585px"></div>
<div class="pi" style="top:589px"><span style="color:#222;font-weight:bold">·</span> 护彤</div><div class="pv" style="top:589px"><em>¥</em><b>8.5</b></div>
<div class="pd" style="top:611px"></div>
<div class="pi" style="top:615px"><span style="color:#222;font-weight:bold">·</span> 吗丁啉</div><div class="pv" style="top:615px"><em>¥</em><b>13.9</b></div>
<div class="pd" style="top:637px"></div>
<div class="pi" style="top:641px"><span style="color:#222;font-weight:bold">·</span> 泰诺</div><div class="pv" style="top:641px"><em>¥</em><b>9.9</b></div>
<div class="pd" style="top:663px"></div>
<div class="pi" style="top:667px"><span style="color:#222;font-weight:bold">·</span> 金芪降糖片</div><div class="pv" style="top:667px"><em>¥</em><b>19.9</b></div>

<div id="prf"></div>
<div class="pb" style="left:782px;background:linear-gradient(#ff8c10,#ff6400)">药店登录</div>
<div class="pb" style="left:876px;background:linear-gradient(#3aa2ea,#1b7ccd)">在线注册</div>

<div id="zt"></div>
<div id="zth"></div>
<div class="a" style="left:778px;top:759px;font-size:13px;font-weight:bold;color:#333;line-height:18px">专题</div>
<div class="a" style="left:927px;top:760px;font-size:12px;color:#888;line-height:16px">更多&gt;&gt;</div>
<svg class="a" style="left:777px;top:806px" width="72" height="42" viewBox="0 0 72 42"><ellipse cx="36" cy="21" rx="36" ry="21" fill="#d9000e"/><text x="8.5" y="33" font-family="Liberation Serif" font-size="34" textLength="55" lengthAdjust="spacingAndGlyphs" fill="#fff">OTC</text></svg>
<div class="a" style="left:859px;top:794px;font-size:13px;font-weight:bold;color:#0f5c99;line-height:18px"><span style="font-family:'Liberation Serif',serif;font-size:13px;letter-spacing:-.8px">OTC</span>禁投广告<span style="font-family:'Liberation Serif',serif;font-size:14px;margin-left:2px">?</span></div>
<div class="a" style="left:859px;top:816px;width:112px;font-size:12px;color:#777;line-height:18px;white-space:normal"><span style="font-family:'Liberation Mono',monospace;font-size:11.5px;letter-spacing:-1px">OTC</span>广告禁令引发争议。[<span class="dl">详情</span>]</div>
<div class="a" style="left:780px;top:868px;font-size:12px;color:#0f5c99;line-height:18px"><span style="color:#222;font-weight:bold">·</span> 冬季老人常备药物大全</div>
</body></html>
